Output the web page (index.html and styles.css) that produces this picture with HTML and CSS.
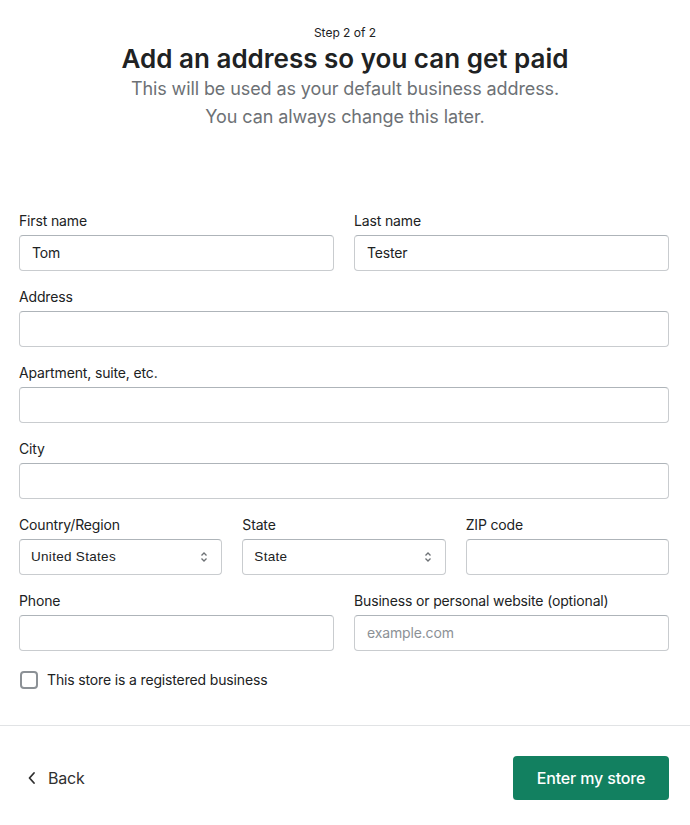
FILE: index.html
```html
<!DOCTYPE html>
<html>
<head>
<meta charset="utf-8">
<link rel="stylesheet" href="styles.css">
</head>
<body>
<div class="page">
  <header class="head">
    <div class="step">Step 2 of 2</div>
    <h1 class="title">Add an address so you can get paid</h1>
    <p class="sub">This will be used as your default business address.<br>You can always change this later.</p>
  </header>
  <form class="form">
    <div class="row two">
      <div class="field"><label class="label">First name</label><div class="input">Tom</div></div>
      <div class="field"><label class="label">Last name</label><div class="input">Tester</div></div>
    </div>
    <div class="row"><div class="field"><label class="label">Address</label><div class="input"></div></div></div>
    <div class="row"><div class="field"><label class="label">Apartment, suite, etc.</label><div class="input"></div></div></div>
    <div class="row"><div class="field"><label class="label">City</label><div class="input"></div></div></div>
    <div class="row three">
      <div class="field"><label class="label">Country/Region</label>
        <div class="input select"><span class="sel-text">United States</span>
          <svg class="arrows" width="8" height="12" viewBox="0 0 8 12"><path d="M1.5 4.5 4 2 6.5 4.5M1.5 7.5 4 10 6.5 7.5" fill="none" stroke="#6d7175" stroke-width="1.3"/></svg>
        </div>
      </div>
      <div class="field"><label class="label">State</label>
        <div class="input select"><span class="sel-text">State</span>
          <svg class="arrows" width="8" height="12" viewBox="0 0 8 12"><path d="M1.5 4.5 4 2 6.5 4.5M1.5 7.5 4 10 6.5 7.5" fill="none" stroke="#6d7175" stroke-width="1.3"/></svg>
        </div>
      </div>
      <div class="field"><label class="label">ZIP code</label><div class="input"></div></div>
    </div>
    <div class="row two">
      <div class="field"><label class="label">Phone</label><div class="input"></div></div>
      <div class="field"><label class="label">Business or personal website (optional)</label><div class="input placeholder">example.com</div></div>
    </div>
    <div class="check-row"><span class="box"></span><span class="check-text">This store is a registered business</span></div>
  </form>
  <footer class="foot">
    <a class="back"><svg width="10" height="14" viewBox="0 0 10 14"><path d="M7 2 2.5 7 7 12" fill="none" stroke="#303030" stroke-width="1.8" stroke-linecap="round" stroke-linejoin="round"/></svg><span>Back</span></a>
    <button class="primary" type="button">Enter my store</button>
  </footer>
</div>
</body>
</html>
```

FILE: styles.css
```css
* { box-sizing: border-box; }
html, body { margin: 0; padding: 0; background: #fff; }
body { font-family: Inter, "Noto Sans", sans-serif; color: #202223; }
.page { width: 690px; }
.head { text-align: center; padding-top: 25px; }
.step { font-size: 12px; line-height: 16px; color: #202223; }
.title { margin: 2px 0 0; font-size: 26px; line-height: 32px; font-weight: 600; color: #202223; letter-spacing: 0; }
.sub { margin: 0; font-size: 18px; line-height: 28px; color: #6d7175; letter-spacing: -0.1px; }
.form { padding: 80px 21px 0 19px; }
.row { display: grid; grid-template-columns: 1fr; gap: 20px; margin-bottom: 16px; }
.row.two { grid-template-columns: 1fr 1fr; gap: 20px; }
.row.three { grid-template-columns: 1fr 1fr 1fr; gap: 20px; }
.label { display: block; font-size: 14px; line-height: 20px; margin-bottom: 4px; color: #202223; letter-spacing: -0.15px; }
.input { height: 36px; border: 1px solid #c9cccf; border-top-color: #aeb4b9; border-radius: 4px; padding: 0 12px; font-size: 14px; line-height: 34px; color: #202223; letter-spacing: -0.15px; }
.placeholder { color: #8c9196; }
.select { display: flex; align-items: center; justify-content: space-between; padding: 0 13px 0 11px; }
.sel-text { font-family: "Liberation Sans", Arial, sans-serif; font-size: 13.5px; letter-spacing: 0.3px; color: #202223; }
.arrows { display: block; }
.check-row { display: flex; align-items: center; gap: 9px; margin-top: 19px; padding-left: 1px; }
.box { width: 18px; height: 18px; border: 2px solid #8c9196; border-radius: 4px; }
.check-text { font-size: 14px; line-height: 20px; letter-spacing: -0.15px; }
.foot { margin-top: 35px; border-top: 1px solid #e1e3e5; display: flex; align-items: center; justify-content: space-between; padding: 30px 21px 0 27px; }
.back { display: flex; align-items: center; gap: 11px; font-size: 16px; color: #303030; letter-spacing: -0.2px; }
.back span { line-height: 20px; }
.primary { width: 156px; height: 44px; background: #128060; color: #fff; border: none; border-radius: 4px; font-family: Inter, "Noto Sans", sans-serif; font-size: 16px; font-weight: 500; letter-spacing: -0.15px; box-shadow: 0 1px 0 rgba(0,0,0,0.15); }
```
